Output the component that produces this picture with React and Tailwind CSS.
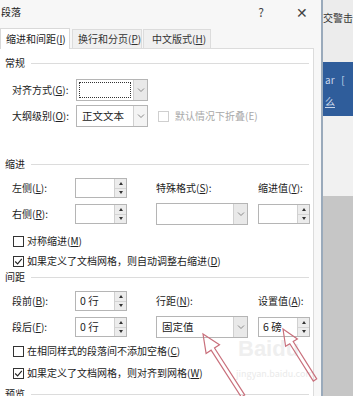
import React from 'react';

const font = { fontFamily: '"Noto Sans CJK SC", "Noto Sans", sans-serif' };

const Spin = ({ value = '' }) => (
  <div className="flex w-[52px] h-[20px] border border-[#b5b5b5] bg-white">
    <div className="flex-1 pl-[4px] leading-[18px] text-[10.5px] whitespace-pre">{value}</div>
    <div className="w-[12px] flex flex-col border-l border-[#d0d0d0]">
      <div className="flex-1 bg-[#ececec] flex items-center justify-center border-b border-[#d4d4d4]">
        <div className="w-0 h-0 border-l-[2.5px] border-r-[2.5px] border-b-[3px] border-l-transparent border-r-transparent border-b-[#333]" />
      </div>
      <div className="flex-1 bg-[#ececec] flex items-center justify-center">
        <div className="w-0 h-0 border-l-[2.5px] border-r-[2.5px] border-t-[3px] border-l-transparent border-r-transparent border-t-[#333]" />
      </div>
    </div>
  </div>
);

const Chevron = () => (
  <svg width="8" height="6" viewBox="0 0 8 6">
    <path d="M1 1.5 L4 4.5 L7 1.5" fill="none" stroke="#8a8a8a" strokeWidth="1" />
  </svg>
);

const Combo = ({ width, value = '', focus = false, disabled = false }) => (
  <div className="flex h-[22px] border border-[#b5b5b5] bg-white" style={{ width }}>
    <div className="flex-1 p-[2px]">
      <div className={`h-full pl-[3px] leading-[15px] text-[10.5px] ${focus ? 'border border-dotted border-[#333]' : ''}`}>{value}</div>
    </div>
    <div className={`w-[14px] flex items-center justify-center border-l border-[#d0d0d0] ${disabled ? 'bg-[#f4f4f4]' : 'bg-[#e9e9e9]'}`}>
      <Chevron />
    </div>
  </div>
);

const Check = ({ checked, label }) => (
  <div className="flex items-center h-[16px] pl-[13px] gap-[3px]">
    <div className="w-[11px] h-[11px] border border-[#333] bg-white flex items-center justify-center">
      {checked && (
        <svg width="9" height="9" viewBox="0 0 9 9">
          <path d="M1.2 4.5 L3.6 6.9 L7.8 1.8" fill="none" stroke="#222" strokeWidth="1.1" />
        </svg>
      )}
    </div>
    <span className="text-[10px] leading-[16px] whitespace-nowrap">{label}</span>
  </div>
);

const Heading = ({ text }) => (
  <div className="flex items-center h-[16px] pl-[5px] gap-[6px]">
    <span className="text-[10px] leading-[16px]">{text}</span>
    <div className="flex-1 h-px bg-[#dcdcdc] mr-[4px]" />
  </div>
);

const Label = ({ children, w = 'w-[63px]' }) => (
  <div className={`${w} text-[10px] leading-[16px] whitespace-nowrap`}>{children}</div>
);

export default function App() {
  return (
    <div className="relative w-[353px] h-[396px] overflow-hidden flex text-[#222] leading-[16px]" style={font}>
      {/* dialog */}
      <div className="w-[322px] h-full bg-[#f7f7f7] flex flex-col">
        <div className="h-[24px] flex items-center text-[10px] shrink-0">
          <span className="pl-[1px]">段落</span>
          <span className="ml-auto mr-[32px] text-[12px] text-[#444]">?</span>
          <span className="mr-[13px] text-[14px] text-[#444]">✕</span>
        </div>
        <div className="flex items-end h-[21px] mt-[3px] shrink-0 text-[10px] whitespace-nowrap">
          <div className="w-[70px] h-[21px] bg-white border border-b-0 border-[#d9d9d9] flex items-center pl-[5px] relative z-10 -mb-px">缩进和间距(<u>I</u>)</div>
          <div className="w-[70px] h-[19px] ml-[2px] bg-[#f0f0f0] border border-b-0 border-[#dcdcdc] flex items-center pl-[5px] text-[#333]">换行和分页(<u>P</u>)</div>
          <div className="w-[68px] h-[19px] ml-[1px] bg-[#f0f0f0] border border-b-0 border-[#dcdcdc] flex items-center pl-[8px] text-[#333]">中文版式(<u>H</u>)</div>
        </div>
        <div className="w-[314px] flex-1 bg-white border-t border-r border-[#dcdcdc] pt-[6px]">
          <Heading text="常规" />
          <div className="flex items-center mt-[8px] pl-[12px]">
            <Label w="w-[64px]">对齐方式(<u>G</u>):</Label>
            <Combo width={72} focus />
          </div>
          <div className="flex items-center mt-[4px] pl-[12px]">
            <Label w="w-[64px]">大纲级别(<u>O</u>):</Label>
            <Combo width={72} value="正文文本" disabled />
            <div className="ml-[10px] w-[11px] h-[11px] border border-[#cfcfcf]" />
            <span className="ml-[6px] text-[10px] text-[#a8a8a8]">默认情况下折叠(E)</span>
          </div>

          <div className="mt-[29px]">
            <Heading text="缩进" />
          </div>
          <div className="flex items-center mt-[6px] pl-[12px]">
            <Label>左侧(<u>L</u>):</Label>
            <Spin />
            <div className="ml-[29px] w-[102px] text-[10px]">特殊格式(<u>S</u>):</div>
            <div className="text-[10px]">缩进值(<u>Y</u>):</div>
          </div>
          <div className="flex items-center mt-[5px] pl-[12px]">
            <Label>右侧(<u>R</u>):</Label>
            <Spin />
            <div className="ml-[29px]">
              <Combo width={92} />
            </div>
            <div className="ml-[10px]">
              <Spin />
            </div>
          </div>
          <div className="mt-[8px]">
            <Check label={<>对称缩进(<u>M</u>)</>} />
          </div>
          <div className="mt-[4px]">
            <Check checked label={<>如果定义了文档网格，则自动调整右缩进(<u>D</u>)</>} />
          </div>

          <Heading text="间距" />
          <div className="flex items-center mt-[6px] pl-[12px]">
            <Label>段前(<u>B</u>):</Label>
            <Spin value="0 行" />
            <div className="ml-[29px] w-[102px] text-[10px]">行距(<u>N</u>):</div>
            <div className="text-[10px]">设置值(<u>A</u>):</div>
          </div>
          <div className="flex items-center mt-[5px] pl-[12px]">
            <Label>段后(<u>F</u>):</Label>
            <Spin value="0 行" />
            <div className="ml-[29px]">
              <Combo width={92} value="固定值" />
            </div>
            <div className="ml-[10px]">
              <Spin value="6 磅" />
            </div>
          </div>
          <div className="mt-[5px]">
            <Check label={<>在相同样式的段落间不添加空格(<u>C</u>)</>} />
          </div>
          <div className="mt-[6px]">
            <Check checked label={<>如果定义了文档网格，则对齐到网格(<u>W</u>)</>} />
          </div>
          <div className="mt-[5px]">
            <Heading text="预览" />
          </div>
        </div>
      </div>

      {/* word window behind */}
      <div className="flex-1 h-full border-l-2 border-[#9aaabb] flex flex-col text-[10px]">
        <div className="h-[62px] bg-[#ececec] pt-[10px] whitespace-nowrap text-[#333]">交警击</div>
        <div className="h-[54px] bg-[#2f5d9b] text-[#c9d6ea] px-[2px] pt-[10px] whitespace-nowrap">
          <div>ar&nbsp;&nbsp;&nbsp;[</div>
          <div className="underline mt-[6px]">么</div>
        </div>
        <div className="h-[80px] bg-[#f1f1f1]" />
        <div className="flex-1 bg-[#c6c6c6]" />
      </div>

      {/* watermark */}
      <div className="absolute left-[238px] top-[338px] text-[22px] leading-none text-[#efefef] font-bold whitespace-nowrap" style={{ fontFamily: '"Liberation Sans", sans-serif' }}>Baidu</div>
      <div className="absolute left-[236px] top-[366px] text-[9px] text-[#eaeaea] whitespace-nowrap">jingyan.baidu.com</div>

      {/* red arrows */}
      <svg className="absolute inset-0" width="353" height="396" viewBox="0 0 353 396">
        <polygon
          points="203,334 206.1,353.4 211.1,350.2 241.3,397.1 244.7,394.9 214.5,348 219.5,344.8"
          fill="none" stroke="#c9707c" strokeWidth="1.2" strokeLinejoin="miter"
        />
        <polygon
          points="283,329 285.6,346.3 289.8,343.7 313.3,381.1 316.7,378.9 293.2,341.5 297.4,338.9"
          fill="none" stroke="#c9707c" strokeWidth="1.2" strokeLinejoin="miter"
        />
      </svg>
    </div>
  );
}
